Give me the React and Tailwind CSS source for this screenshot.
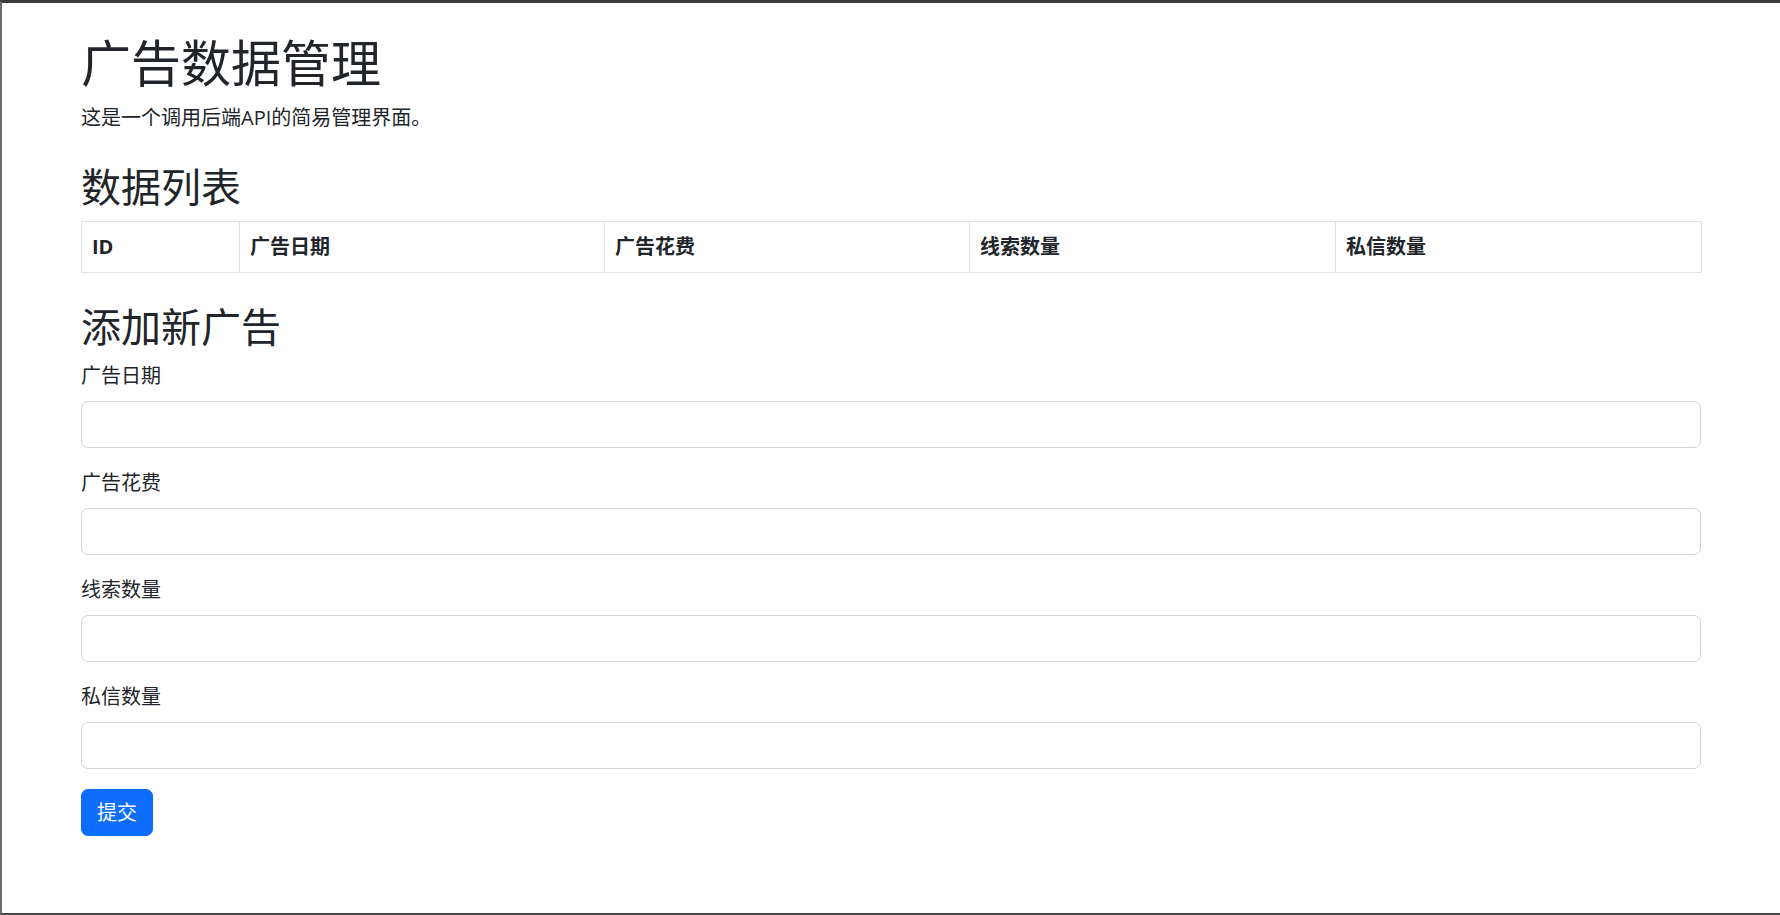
import { useState } from "react";

const FIELDS = [
  { key: "date", label: "广告日期" },
  { key: "cost", label: "广告花费" },
  { key: "leads", label: "线索数量" },
  { key: "messages", label: "私信数量" },
];

const App = () => {
  const [form, setForm] = useState({ date: "", cost: "", leads: "", messages: "" });
  const [rows] = useState([]);

  const update = (key) => (e) => setForm({ ...form, [key]: e.target.value });

  return (
    <div className="h-[915px] bg-white border-t-[3px] border-l-2 border-b-2 border-t-[#3a3a3a] border-l-[#6b6b6b] border-b-[#454545] text-[#212529] font-['Open_Sans','Noto_Sans_CJK_SC',sans-serif] text-[20px] leading-[30px]">
      <div className="w-[1650px] mx-auto px-[15px] mt-[30px]">
        <h1 className="text-[50px] leading-[60px] font-normal mb-[10px]">广告数据管理</h1>
        <p className="mb-[20px]">这是一个调用后端API的简易管理界面。</p>

        <div className="mt-[30px]">
          <h2 className="text-[40px] leading-[48px] font-normal mb-[10px]">数据列表</h2>
          <table className="w-full table-fixed border-collapse mb-[20px]">
            <colgroup>
              <col className="w-[158px]" />
              <col className="w-[365px]" />
              <col className="w-[365px]" />
              <col className="w-[366px]" />
              <col className="w-[366px]" />
            </colgroup>
            <thead>
              <tr>
                {["ID", "广告日期", "广告花费", "线索数量", "私信数量"].map((h) => (
                  <th
                    key={h}
                    className="border border-[#dee2e6] px-[10px] py-[10px] text-left font-bold"
                  >
                    {h}
                  </th>
                ))}
              </tr>
            </thead>
            <tbody>
              {rows.map((r) => (
                <tr key={r.id}>
                  <td className="border border-[#dee2e6] p-[10px]">{r.id}</td>
                  <td className="border border-[#dee2e6] p-[10px]">{r.date}</td>
                  <td className="border border-[#dee2e6] p-[10px]">{r.cost}</td>
                  <td className="border border-[#dee2e6] p-[10px]">{r.leads}</td>
                  <td className="border border-[#dee2e6] p-[10px]">{r.messages}</td>
                </tr>
              ))}
            </tbody>
          </table>
        </div>

        <div className="mt-[30px]">
          <h2 className="text-[40px] leading-[48px] font-normal mb-[10px]">添加新广告</h2>
          <form onSubmit={(e) => e.preventDefault()}>
            {FIELDS.map((f) => (
              <div key={f.key} className="mb-[20px]">
                <label className="block mb-[10px]">{f.label}</label>
                <input
                  value={form[f.key]}
                  onChange={update(f.key)}
                  className="block w-full h-[47px] px-[15px] border border-[#ced4da] rounded-[7px] bg-white outline-none"
                />
              </div>
            ))}
            <button
              type="submit"
              className="h-[47px] px-[15px] bg-[#0d6efd] text-white rounded-[7px] border border-[#0d6efd]"
            >
              提交
            </button>
          </form>
        </div>
      </div>
    </div>
  );
};

export default App;
